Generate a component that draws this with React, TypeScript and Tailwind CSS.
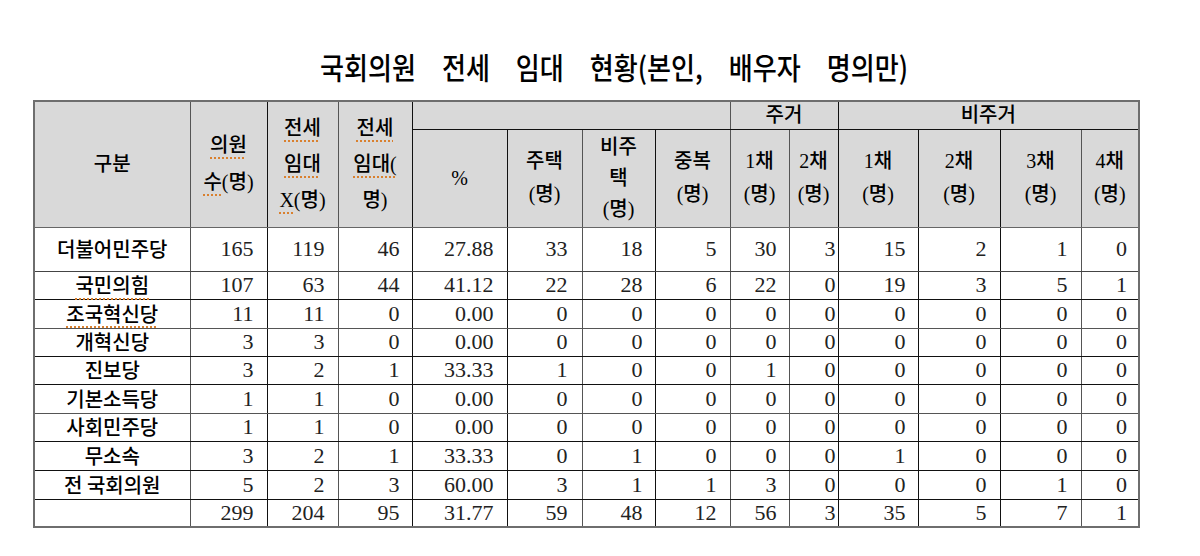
import React from "react";

const rows: [string, string[]][] = [
  ["더불어민주당", ["165", "119", "46", "27.88", "33", "18", "5", "30", "3", "15", "2", "1", "0"]],
  ["국민의힘", ["107", "63", "44", "41.12", "22", "28", "6", "22", "0", "19", "3", "5", "1"]],
  ["조국혁신당", ["11", "11", "0", "0.00", "0", "0", "0", "0", "0", "0", "0", "0", "0"]],
  ["개혁신당", ["3", "3", "0", "0.00", "0", "0", "0", "0", "0", "0", "0", "0", "0"]],
  ["진보당", ["3", "2", "1", "33.33", "1", "0", "0", "1", "0", "0", "0", "0", "0"]],
  ["기본소득당", ["1", "1", "0", "0.00", "0", "0", "0", "0", "0", "0", "0", "0", "0"]],
  ["사회민주당", ["1", "1", "0", "0.00", "0", "0", "0", "0", "0", "0", "0", "0", "0"]],
  ["무소속", ["3", "2", "1", "33.33", "0", "1", "0", "0", "0", "1", "0", "0", "0"]],
  ["전 국회의원", ["5", "2", "3", "60.00", "3", "1", "1", "3", "0", "0", "0", "1", "0"]],
  ["", ["299", "204", "95", "31.77", "59", "48", "12", "56", "3", "35", "5", "7", "1"]],
];

const widths = [156, 77, 71, 74, 95, 75, 73, 75, 59, 49, 80, 82, 81, 58];

const colR = [
  "border-r-[#555]",
  "border-r-[#111]",
  "border-r-[#555]",
  "border-r-[#111]",
  "border-r-[#111]",
  "border-r-[#555]",
  "border-r-[#111]",
  "border-r-[#555]",
  "border-r-[#555]",
  "border-r-[#111]",
  "border-r-[#111]",
  "border-r-[#111]",
  "border-r-[#555]",
  "border-r-[#6e6e6e]",
];

const rowB = [
  "border-b-[#444]",
  "border-b-[#111]",
  "border-b-[#555]",
  "border-b-[#111]",
  "border-b-[#111]",
  "border-b-[#555]",
  "border-b-[#111]",
  "border-b-[#111]",
  "border-b-[#111]",
  "border-b-[#6e6e6e]",
];

const rowH = ["h-[44px]", "h-[28px]", "h-[29px]", "h-[28px]", "h-[28px]", "h-[29px]", "h-[28px]", "h-[29px]", "h-[29px]", "h-[28px]"];

const numPad = [
  "pr-[13px]",
  "pr-[13px]",
  "pr-[12px]",
  "pr-[13px]",
  "pr-[14px]",
  "pr-[12px]",
  "pr-[13px]",
  "pr-[12px]",
  "pr-[2px]",
  "pr-[12px]",
  "pr-[13px]",
  "pr-[13px]",
  "pr-[11px]",
];

const spell = "underline decoration-dotted decoration-[#d9802e] underline-offset-[5px] decoration-[1.5px]";

function H({
  children,
  className = "",
  rowSpan,
  colSpan,
}: {
  children?: React.ReactNode;
  className?: string;
  rowSpan?: number;
  colSpan?: number;
}) {
  return (
    <th
      rowSpan={rowSpan}
      colSpan={colSpan}
      className={`border border-[#222] bg-[#d9d9d9] p-0 text-center align-middle font-medium text-[20px] text-black ${className}`}
    >
      {children}
    </th>
  );
}

export default function App() {
  return (
    <div className="w-[1200px] h-[556px] bg-white overflow-hidden font-['Liberation_Serif','Noto_Sans_CJK_KR',serif]">
      <div className="h-[100px] pt-[48px] pl-[320px]">
        <span className="inline-block origin-left scale-x-[0.87] whitespace-nowrap text-[30px] leading-[36px] font-medium text-black [word-spacing:23px] font-['Noto_Sans_CJK_KR',sans-serif]">
          국회의원 전세 임대 현황(본인, 배우자 명의만)
        </span>
      </div>
      <div className="pl-[33px]">
        <table className="table-fixed border-collapse border-2 border-[#6e6e6e] w-[1105px]">
          <colgroup>
            {widths.map((w, i) => (
              <col key={i} style={{ width: w }} />
            ))}
          </colgroup>
          <thead>
            <tr className="h-[28px]">
              <H rowSpan={2} className="border-b-[#666] border-r-[#555]">
                구분
              </H>
              <H rowSpan={2} className="leading-[37px] border-b-[#666] border-r-[#111]">
                <span className={spell}>의원</span>
                <br />
                <span className={spell}>수</span>(명)
              </H>
              <H rowSpan={2} className="leading-[36px] border-b-[#666] border-r-[#555]">
                <span className={spell}>전세</span>
                <br />
                <span className={spell}>임대</span>
                <br />
                <span className={spell}>X</span>(명)
              </H>
              <H rowSpan={2} className="leading-[36px] border-b-[#666] border-r-[#111]">
                <span className={spell}>전세</span>
                <br />
                <span className={spell}>임대(</span>
                <br />
                명)
              </H>
              <H colSpan={4} className="border-b-[#111] border-r-[#555]" />
              <H colSpan={2} className="border-b-[#111] border-r-[#111] leading-[26px]">
                주거
              </H>
              <H colSpan={4} className="border-b-[#111] border-r-[#6e6e6e] leading-[26px]">
                비주거
              </H>
            </tr>
            <tr className="h-[98px]">
              <H className="border-b-[#666] border-r-[#111]">%</H>
              <H className="border-b-[#666] leading-[33px] border-r-[#555]">
                주택
                <br />
                (명)
              </H>
              <H className="border-b-[#666] leading-[31px] border-r-[#111]">
                비주
                <br />
                택
                <br />
                (명)
              </H>
              <H className="border-b-[#666] leading-[33px] border-r-[#555]">
                중복
                <br />
                (명)
              </H>
              <H className="border-b-[#666] leading-[33px] border-r-[#555]">
                1채
                <br />
                (명)
              </H>
              <H className="border-b-[#666] leading-[33px] border-r-[#111]">
                2채
                <br />
                (명)
              </H>
              <H className="border-b-[#666] leading-[33px] border-r-[#111]">
                1채
                <br />
                (명)
              </H>
              <H className="border-b-[#666] leading-[33px] border-r-[#111]">
                2채
                <br />
                (명)
              </H>
              <H className="border-b-[#666] leading-[33px] border-r-[#555]">
                3채
                <br />
                (명)
              </H>
              <H className="border-b-[#666] leading-[33px] border-r-[#6e6e6e]">
                4채
                <br />
                (명)
              </H>
            </tr>
          </thead>
          <tbody>
            {rows.map(([name, vals], r) => (
              <tr key={r} className={rowH[r]}>
                <td
                  className={`border border-[#222] ${colR[0]} ${rowB[r]} p-0 text-center align-middle text-[20px] leading-none font-medium text-black font-['Noto_Sans_CJK_KR',sans-serif] whitespace-nowrap`}
                >
                  {r === 1 || r === 2 ? <span className={spell}>{name}</span> : name}
                </td>
                {vals.map((v, c) => (
                  <td
                    key={c}
                    className={`border border-[#222] ${colR[c + 1]} ${rowB[r]} ${numPad[c]} py-0 pl-0 text-right align-middle text-[22px] leading-none text-[#222]`}
                  >
                    {v}
                  </td>
                ))}
              </tr>
            ))}
          </tbody>
        </table>
      </div>
    </div>
  );
}
